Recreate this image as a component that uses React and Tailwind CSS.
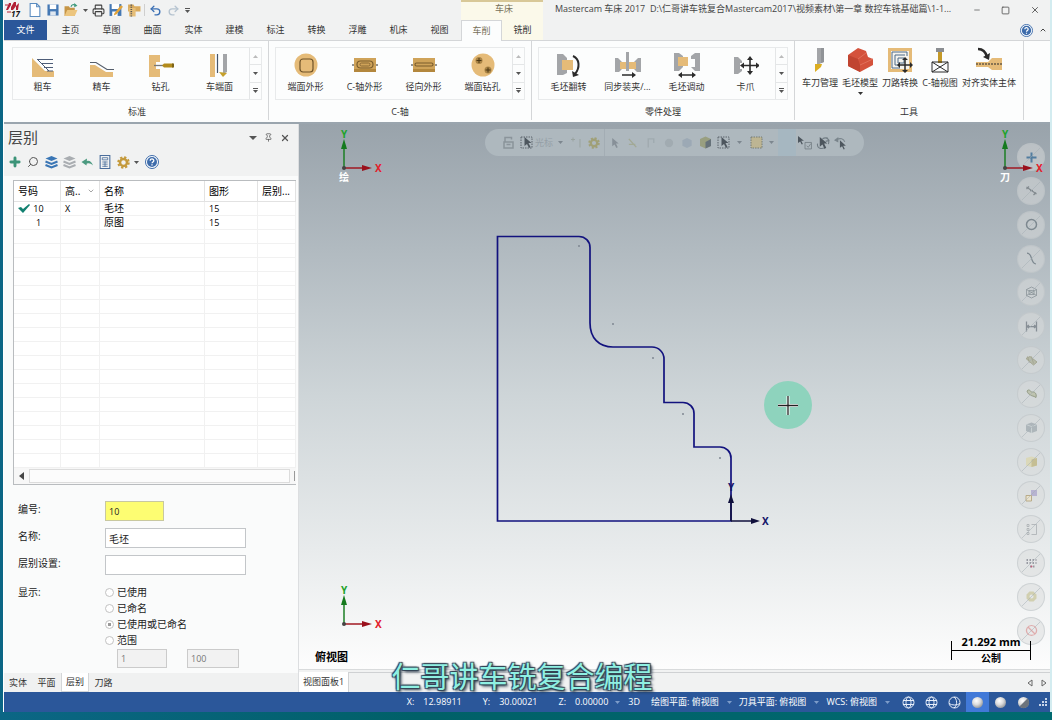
import React, { useState } from 'react';
import { ChevronDown, ChevronUp, Pin, X, Minus, Square, Undo2, Redo2, Search, Plus, Printer } from 'lucide-react';

const TAN = '#e5bb78';
const GREY = '#a3a5a8';
const INK = '#2b2b2b';

const MENU = ['主页', '草图', '曲面', '实体', '建模', '标注', '转换', '浮雕', '机床', '视图'];

const Icon = ({ size = 26, className = '', children }) => (
  <svg width={size} height={size} viewBox="0 0 26 26" fill="none" className={`shrink-0 ${className}`} aria-hidden="true">
    {children}
  </svg>
);

const Caret = ({ className = '' }) => (
  <svg width="5" height="3" viewBox="0 0 5 3" className={`shrink-0 ${className}`} fill="currentColor" aria-hidden="true">
    <path d="M0 0h5L2.5 3z" />
  </svg>
);

const Rough = () => (
  <Icon>
    <path d="M2 6 15 19h9v6H2z" fill={TAN} />
    <path d="M8 7.500h15M11 11.500h12M14 15.500h9M17 19h6" stroke="#4d5d78" />
    <path d="m7 7 12 12" stroke="#4d5d78" />
  </Icon>
);

const Finish = () => (
  <Icon>
    <path d="M1 13h5l11 7h7v5H1z" fill={TAN} />
    <path d="M1 10.500h6l11 7h7" stroke="#555e6b" strokeWidth="1.200" />
  </Icon>
);

const Drill = () => (
  <Icon>
    <path d="M1 3h11v7H8v7h4v8H1z" fill={TAN} />
    <path d="M6 13.500h9" stroke="#777" strokeWidth="1.300" />
    <path d="m14 13.500 2-2h9v4h-9z" fill="#b28b1c" />
    <path d="M24 11.500h2v4h-2z" fill="#7d6418" />
  </Icon>
);

const Face = () => (
  <Icon>
    <path d="M3 2h5v23H3z" fill={TAN} />
    <path d="M10.500 2v19" stroke="#44546a" strokeWidth="1.200" />
    <path d="M16 2h4v18l-4 2z" fill={GREY} />
    <path d="m12 20 8 1-4 4z" fill="#c5a02a" />
  </Icon>
);

const FaceContour = () => (
  <Icon>
    <circle cx="13" cy="13" r="11.500" fill={TAN} />
    <rect x="7" y="7" width="13" height="13" rx="3" stroke="#6e5228" strokeWidth="1.200" />
  </Icon>
);

const AxisContour = () => (
  <Icon>
    <path d="M0 13h26" stroke={INK} />
    <rect x="2" y="6" width="22" height="14" fill="#cfa359" />
    <path d="M2 17h22v3H2z" fill="#b3873d" />
    <rect x="5" y="9" width="16" height="7" rx="3.500" stroke="#7b5d2d" strokeWidth="1.200" />
    <rect x="8" y="11" width="10" height="3" rx="1.500" stroke="#8b6a35" />
  </Icon>
);

const CrossContour = () => (
  <Icon>
    <path d="M0 13h26" stroke={INK} />
    <rect x="2" y="6" width="22" height="14" fill="#cfa359" />
    <path d="M2 17h22v3H2z" fill="#b3873d" />
    <rect x="4" y="11" width="18" height="3" rx="1.500" stroke="#7b5d2d" strokeWidth="1.200" />
  </Icon>
);

const FaceDrill = () => (
  <Icon>
    <circle cx="13" cy="13" r="11.500" fill={TAN} />
    <circle cx="9" cy="8.500" r="3.500" fill="#a98446" />
    <circle cx="18" cy="18" r="3.500" fill="#a98446" />
    <path d="M9 6v5M6.500 8.500h5M18 15.500v5M15.500 18h5" stroke="#4b3713" />
  </Icon>
);

const Flip = () => (
  <Icon>
    <path d="M1 2h6l4 4v15l-4 2H1z" fill={GREY} />
    <path d="M6 8h11v10H6z" fill={TAN} />
    <path d="M17 4c7 3 7 12 2 18" stroke={INK} strokeWidth="2" />
    <path d="m16 19 1 6 6-2z" fill={INK} />
  </Icon>
);

const Sync = () => (
  <Icon>
    <path d="M0 6h3l4 4v7l-3 3H0zM26 6h-3l-4 4v7l3 3h4z" fill={GREY} />
    <path d="M5 10h16v7H5z" fill={TAN} />
    <path d="M11 0h3v19h-3z" fill={GREY} />
    <path d="M7 23h11" stroke={INK} strokeWidth="1.500" />
    <path d="m17 20 4 3-4 3z" fill={INK} />
  </Icon>
);

const Advance = () => (
  <Icon>
    <path d="M0 1h5l4 3v11l-4 4H0zM26 1h-5l-4 3v3h4v8h-4l4 4h5z" fill={GREY} />
    <path d="M4 5h10v9H4z" fill={TAN} />
    <path d="M7 23h12" stroke={INK} strokeWidth="1.500" />
    <path d="m8 20-4 3 4 3zM18 20l4 3-4 3z" fill={INK} />
  </Icon>
);

const Chuck = () => (
  <Icon>
    <path d="M1 5h4l4 4v2H7v6h2v2l-4 3H1z" fill={GREY} />
    <path d="M17 6v15M9 13.500h16" stroke={INK} strokeWidth="1.600" />
    <path d="m14 8 3-4 3 4zM14 19l3 4 3-4zM11 10.500l-4 3 4 3zM23 10.500l4 3-4 3z" fill={INK} />
  </Icon>
);

const ToolManager = () => (
  <Icon>
    <path d="M10 1h7v14l-7 3z" fill={GREY} />
    <path d="M14 1h3v14l-3 1z" fill="#909397" />
    <path d="M8 17h7l-1 3-6 5z" fill="#dcae22" />
  </Icon>
);

const StockModel = () => (
  <Icon>
    <path d="m1 8 10-7 8 3 2 6 5 2v6L13 25 1 19z" fill="#d4523c" />
    <path d="m1 8 10 4 2 6v7L1 19z" fill="#c04430" />
    <path d="m11 12 8-6M13 18l13-6" stroke="#e0705b" />
  </Icon>
);

const Transform = () => (
  <Icon>
    <path d="M1 1h24v24H1z" fill={TAN} />
    <path d="M4 4h18v18H4z" fill="#f5f3ee" />
    <path d="M5 5h15v4M5 5v16h8M8 8h10M8 8v10h5M11 11h6v5h-6z" stroke="#4d6b88" />
    <path d="M18 11v14M11 18h14" stroke={INK} strokeWidth="1.500" />
    <path d="m15 13 3-3 3 3zM15 23l3 3 3-3zM13 15l-3 3 3 3zM23 15l3 3-3 3z" fill={INK} />
  </Icon>
);

const AxisView = () => (
  <Icon>
    <path d="M9 1h8v4H9z" fill="#8b8e92" />
    <path d="M11 5h4v11h-4z" fill="#c59a28" />
    <path d="M5 15h16v10H5zM5 15l16 10M21 15 5 25" stroke={INK} />
  </Icon>
);

const AlignBody = () => (
  <Icon>
    <path d="M0 15h12l4-4h10v12H16l-4-3H0z" fill={TAN} />
    <path d="M0 17h26" stroke={INK} strokeWidth="1.200" strokeDasharray="2 1" />
    <path d="M2 2c5 0 8 4 9 8" stroke={INK} strokeWidth="2.500" />
    <path d="m7 10 6 3 1-7z" fill={INK} />
  </Icon>
);

const GALLERIES = [
  { title: '标准', items: [['粗车', Rough], ['精车', Finish], ['钻孔', Drill], ['车端面', Face]] },
  { title: 'C-轴', items: [['端面外形', FaceContour], ['C-轴外形', AxisContour], ['径向外形', CrossContour], ['端面钻孔', FaceDrill]] },
  { title: '零件处理', items: [['毛坯翻转', Flip], ['同步装夹/...', Sync], ['毛坯调动', Advance], ['卡爪', Chuck]] },
];

const TOOLS = [
  ['车刀管理', ToolManager],
  ['毛坯模型', StockModel, true],
  ['刀路转换', Transform],
  ['C-轴视图', AxisView],
  ['对齐实体主体', AlignBody],
];

const HelpIcon = ({ size = 14 }) => (
  <svg width={size} height={size} viewBox="0 0 14 14" aria-hidden="true">
    <circle cx="7" cy="7" r="6.500" fill="#fff" stroke="#3d6cab" />
    <circle cx="7" cy="7" r="5" fill="#3d6cab" />
    <path d="M5.200 5.700c0-2.400 3.700-2.300 3.600 0C8.800 7 7 7 7 8.300M7 9.300v1.200" fill="none" stroke="#fff" strokeWidth="1.300" />
  </svg>
);

function QuickAccess() {
  const btn = 'flex h-5 w-4 shrink-0 items-center justify-center';
  return (
    <div className="flex w-[457px] shrink-0 items-center">
      <svg width="18" height="18" viewBox="0 0 18 18" className="ml-px mr-1" aria-label="Mastercam 17">
        <path d="M1 9 4 2h2v4l3-5h2v4l3-3-1 7h-2V5L8 9H6V4L3 9z" fill="#b32035" />
        <path d="M2 11h4M0 4h3" stroke="#b32035" />
        <text x="6" y="16" fontSize="8" fontWeight="700" fontStyle="italic" fontFamily="Open Sans, sans-serif" fill="#111">17</text>
      </svg>
      <button aria-label="新建" className={btn}>
        <Icon size={14}><path d="M4 1h12l6 6v18H4z" fill="#fff" stroke="#5b8cc0" strokeWidth="2" /><path d="M16 1v6h6" stroke="#5b8cc0" strokeWidth="2" /></Icon>
      </button>
      <button aria-label="保存" className={`${btn} ml-[2px]`}>
        <Icon size={12}><path d="M1 1h24v24H1z" fill="#4478b4" /><path d="M6 1h14v10H6z" fill="#fff" /><path d="M7 16h12v9H7z" fill="#dfe7f0" /></Icon>
      </button>
      <button aria-label="打开" className={`${btn} ml-[2px]`}>
        <Icon size={14}><path d="M1 6h8l2 3h9v15H1z" fill="#c69546" /><path d="m6 13h19l-5 11H1z" fill="#ecc57e" /><path d="M13 7c1-4 5-5 8-3" stroke="#3f9a7c" strokeWidth="2" /><path d="m19 0 6 5-6 3z" fill="#3f9a7c" /></Icon>
      </button>
      <Caret className="ml-1 text-[#555]" />
      <button aria-label="打印" className={`${btn} ml-[2px]`}><Printer className="size-[13px] text-[#3f3f3f]" /></button>
      <button aria-label="另存为" className={`${btn} ml-[2px]`}>
        <Icon size={14}><path d="M1 2h22v22H1z" fill="#4478b4" /><path d="M5 2h14v9H5zM6 16h10v8H6z" fill="#fff" /><path d="m10 19 12-15 4 3-12 14-5 2z" fill="#e3a53a" /></Icon>
      </button>
      <button aria-label="压缩" className={`${btn} ml-[2px]`}>
        <Icon size={14}><path d="M2 3h10l2 3h11v10H2z" fill="#d9aa5c" /><path d="M4 9h12v16H4z" fill="#e6be78" /><path d="M8 3v22" stroke="#555" strokeWidth="3" strokeDasharray="2 2" /></Icon>
      </button>
      <span className="ml-[2px] h-3 w-px bg-[#cfcfcf]" />
      <button aria-label="撤销" className={`${btn} ml-[2px]`}><Undo2 className="size-[13px] text-[#3a6fb4]" strokeWidth={2.5} /></button>
      <button aria-label="重做" className={`${btn} ml-[2px]`}><Redo2 className="size-[13px] text-[#b5c3d0]" strokeWidth={2.5} /></button>
      <span className="ml-1 flex flex-col items-center gap-px text-[#555]">
        <span className="h-px w-[5px] bg-current" /><Caret />
      </span>
    </div>
  );
}

function TitleBar() {
  return (
    <header className="flex h-5 items-stretch">
      <QuickAccess />
      <div className="w-[82px] shrink-0 border-t-2 border-[#d8c898] bg-[#fbf9ea] pl-1 text-center text-[9px] leading-[14px] text-[#77705a]">车床</div>
      <div className="min-w-0 flex-1 truncate pl-3 text-[9px] leading-[18px] text-[#444] whitespace-pre">
        {'Mastercam 车床 2017  D:\\仁哥讲车铣复合Mastercam2017\\视频素材\\第一章 数控车铣基础篇\\1-1...'}
      </div>
      <div className="flex w-[88px] shrink-0 items-center text-[#444]">
        <button aria-label="最小化" className="flex flex-1 justify-center"><Minus className="size-2" /></button>
        <button aria-label="最大化" className="flex flex-1 justify-center"><Square className="size-[9px]" /></button>
        <button aria-label="关闭" className="flex flex-1 justify-center"><X className="size-[10px]" /></button>
      </div>
    </header>
  );
}

function MenuBar() {
  return (
    <nav className="flex h-[21px] items-stretch border-b border-[#d4d6d8] text-[9px] text-[#333]">
      <button className="mr-[3px] w-[43px] shrink-0 bg-[#2b579a] text-white">文件</button>
      {MENU.map((m) => (
        <button key={m} className="w-[41px] shrink-0">{m}</button>
      ))}
      <button className="-mb-px ml-px w-[41px] shrink-0 border-x border-t border-[#d4d6d8] bg-[#fcfdfd] text-[#77705a]">车削</button>
      <button className="w-[41px] shrink-0 bg-[#fbf9ea]">铣削</button>
      <div className="ml-auto flex items-center gap-[6px] pr-[3px]">
        <button aria-label="帮助"><HelpIcon size={13} /></button>
        <button aria-label="折叠功能区"><ChevronUp className="size-2 text-[#444]" strokeWidth={3} /></button>
      </div>
    </nav>
  );
}

function Gallery({ title, items }) {
  const step = 'flex flex-1 items-center justify-center border-[#e4e6e7] text-[#555]';
  return (
    <section className="flex shrink-0 flex-col items-center border-r border-[#d4d6d8] px-[6px] pt-[6px]">
      <div className="flex h-[53px] border border-[#e8eaeb]">
        {items.map(([label, Glyph]) => (
          <button key={label} className="flex w-[59px] flex-col items-center gap-[2px] pt-1">
            <Glyph />
            <span className="text-[9px] leading-[14px] whitespace-nowrap">{label}</span>
          </button>
        ))}
        <div className="flex w-[12px] flex-col border-l border-[#e4e6e7]">
          <button aria-label="上一行" className={`${step} border-b`}><Caret className="rotate-180 text-[#bbb]" /></button>
          <button aria-label="下一行" className={`${step} border-b`}><Caret /></button>
          <button aria-label="更多" className={`${step} flex-col gap-px`}>
            <span className="h-px w-[5px] bg-current" /><Caret />
          </button>
        </div>
      </div>
      <h2 className="mt-[5px] text-[9px] leading-[14px]">{title}</h2>
    </section>
  );
}

function Ribbon() {
  return (
    <div className="flex h-[83px] items-stretch overflow-hidden border-b-2 border-[#9aa5ae] bg-[#fcfdfd] pb-[2px] pl-[2px] text-[#333]">
      {GALLERIES.map((g) => <Gallery key={g.title} {...g} />)}
      <section className="flex shrink-0 flex-col items-center border-r border-[#d4d6d8] px-[5px] pt-[6px]">
        <div className="flex h-[53px]">
          {TOOLS.map(([label, Glyph, more]) => (
            <button key={label} className="flex min-w-[40px] flex-col items-center px-[2px]">
              <Glyph />
              <span className="mt-[3px] text-[9px] leading-[14px] whitespace-nowrap">{label}</span>
              {more && <Caret className="mt-[2px]" />}
            </button>
          ))}
        </div>
        <h2 className="mt-[5px] text-[9px] leading-[14px]">工具</h2>
      </section>
    </div>
  );
}

const Layers = ({ color }) => (
  <Icon size={13}>
    <path d="m13 0 12 5-12 5L1 5z" fill={color} />
    <path d="m1 11 12 5 12-5M1 18l12 5 12-5" stroke={color} strokeWidth="4" />
  </Icon>
);

const Gear = ({ size = 13, color = '#c49a3c' }) => (
  <Icon size={size}>
    <circle cx="13" cy="13" r="7" stroke={color} strokeWidth="5" />
    <circle cx="13" cy="13" r="10.500" stroke={color} strokeWidth="4" strokeDasharray="4.500 3.750" />
  </Icon>
);

const Check = () => (
  <svg width="12" height="9" viewBox="0 0 12 9" aria-label="当前层" className="shrink-0">
    <path d="m0 4 3-1 2 2 6-5 1 1-7 8z" fill="#118070" />
  </svg>
);

const ROWS = [
  { no: 10, active: true, high: 'X', name: '毛坯', count: 15 },
  { no: 1, active: false, high: '', name: '原图', count: 15 },
];

function LevelTable() {
  const blanks = Array.from({ length: 17 }, (_, i) => i);
  const cell = 'h-[14px] border-r border-b border-[#f1f1f1] p-0 pl-1 leading-[13px]';
  const head = 'h-[21px] border-r border-b border-[#e2e2e2] p-0 pl-1 text-left font-normal whitespace-nowrap overflow-hidden';
  return (
    <div className="ml-[9px] mr-[2px] overflow-hidden border-t border-l border-b border-[#b9bcbf] bg-white">
      <table className="w-full table-fixed border-separate border-spacing-0 text-[10px]">
        <colgroup>
          <col className="w-[47px]" /><col className="w-[39px]" /><col /><col className="w-[53px]" /><col className="w-[38px]" />
        </colgroup>
        <thead>
          <tr>
            <th className={head}>号码</th>
            <th className={head}><span className="flex items-center justify-between pr-1">高..<ChevronDown className="size-[8px] text-[#777]" /></span></th>
            <th className={head}>名称</th>
            <th className={head}>图形</th>
            <th className={head}>层别...</th>
          </tr>
        </thead>
        <tbody>
          {ROWS.map((r) => (
            <tr key={r.no}>
              <td className={cell}>
                <span className="flex items-center gap-[3px] text-[9px]">
                  {r.active ? <Check /> : <span className="w-3" />}
                  <span className="w-[11px] text-center">{r.no}</span>
                </span>
              </td>
              <td className={`${cell} text-[9px]`}>{r.high}</td>
              <td className={cell}>{r.name}</td>
              <td className={`${cell} text-[9px]`}>{r.count}</td>
              <td className={cell} />
            </tr>
          ))}
          {blanks.map((i) => (
            <tr key={i}>
              <td className={cell} /><td className={cell} /><td className={cell} /><td className={cell} /><td className={cell} />
            </tr>
          ))}
        </tbody>
      </table>
      <div className="flex h-[16px] items-stretch bg-[#f7f7f7]">
        <button aria-label="向左滚动" className="flex w-[15px] items-center justify-center text-[#444]">
          <svg width="5" height="8" viewBox="0 0 5 8" fill="currentColor"><path d="M5 0v8L0 4z" /></svg>
        </button>
        <div className="my-px flex-1 border border-[#dcdcdc] bg-[#fcfcfc]" />
        <div className="my-[3px] ml-1 mr-px w-px bg-[#999]" />
      </div>
    </div>
  );
}

const DISPLAY = ['已使用', '已命名', '已使用或已命名', '范围'];

function LevelForm() {
  const [mode, setMode] = useState(DISPLAY[2]);
  const field = 'h-5 border border-[#c3c6c9] bg-white px-[3px] text-[10px]';
  const label = 'w-[87px] shrink-0 leading-4';
  return (
    <form className="mt-[16px] flex flex-col gap-[7px] pl-[14px] text-[10px] text-[#222]">
      <div className="flex">
        <label className={label} htmlFor="no">编号:</label>
        <input id="no" className="h-5 w-[59px] border border-[#c8c8a0] bg-[#fdfd72] px-[3px] text-[9px]" defaultValue="10" />
      </div>
      <div className="flex">
        <label className={label} htmlFor="name">名称:</label>
        <input id="name" className={`${field} w-[141px]`} defaultValue="毛坯" />
      </div>
      <div className="flex">
        <label className={label} htmlFor="set">层别设置:</label>
        <input id="set" className={`${field} w-[141px]`} />
      </div>
      <fieldset className="flex pt-[2px]">
        <span className={label}>显示:</span>
        <div>
          {DISPLAY.map((d) => (
            <label key={d} className="flex h-4 items-center gap-[3px]">
              <input
                type="radio"
                name="display"
                checked={mode === d}
                onChange={() => setMode(d)}
                className="size-[9px] appearance-none rounded-full border border-[#c2c2c2] bg-white checked:bg-[radial-gradient(#999_35%,#fff_40%)]"
              />
              {d}
            </label>
          ))}
          <div className="flex gap-5 pl-3 pt-px">
            <input aria-label="范围起始" disabled className="h-[19px] w-[50px] border border-[#cbcbcb] bg-[#f2f2f2] px-[3px] text-[9px] text-[#777]" defaultValue="1" />
            <input aria-label="范围结束" disabled className="h-[19px] w-[52px] border border-[#cbcbcb] bg-[#f2f2f2] px-[3px] text-[9px] text-[#777]" defaultValue="100" />
          </div>
        </div>
      </fieldset>
    </form>
  );
}

function LevelPanel() {
  const btn = 'flex w-[18px] items-center justify-center';
  return (
    <aside className="flex w-[295px] shrink-0 flex-col border-r border-[#dcdee0] bg-[#fafbfb]">
      <div className="bg-[#f1f2f2] pb-[3px]">
        <div className="flex h-[27px] items-center pl-1 pr-2">
          <h1 className="text-[15px] text-[#444]">层别</h1>
          <div className="ml-auto flex items-center gap-[7px] text-[#555]">
            <button aria-label="菜单"><svg width="8" height="4" viewBox="0 0 8 4" fill="currentColor"><path d="M0 0h8L4 4z" /></svg></button>
            <button aria-label="固定"><Pin className="size-[9px]" /></button>
            <button aria-label="关闭面板"><X className="size-[10px]" strokeWidth={3} /></button>
          </div>
        </div>
        <div className="flex h-[22px] items-center pl-[2px]">
          <button aria-label="添加层别" className={btn}><Plus className="size-[14px] text-[#3c9478]" strokeWidth={5} /></button>
          <button aria-label="查找" className={btn}><Search className="size-[12px] -scale-x-100 text-[#555]" /></button>
          <button aria-label="全部显示" className={btn}><Layers color="#3a76b5" /></button>
          <button aria-label="全部隐藏" className={btn}><Layers color="#a9adb1" /></button>
          <button aria-label="重置" className={btn}>
            <Icon size={13}><path d="M7 12c7-5 14-3 17 7-5-5-10-6-16-2z" fill="#4c9a80" /><path d="M1 12 12 5l-1 14z" fill="#4c9a80" /></Icon>
          </button>
          <button aria-label="属性" className={btn}>
            <Icon size={14}><path d="M4 1h18v24H4z" stroke="#4a6d9c" strokeWidth="2" /><path d="M8 5h10v4H8zM8 13h10M8 17h10M8 21h10M13 12v10" stroke="#4a6d9c" strokeWidth="1.500" /></Icon>
          </button>
          <button aria-label="选项" className={btn}><Gear /></button>
          <Caret className="ml-[2px] mr-[4px] text-[#555]" />
          <button aria-label="帮助" className={btn}><HelpIcon /></button>
        </div>
      </div>
      <div className="flex-1 pt-1">
        <LevelTable />
        <LevelForm />
      </div>
      <div className="flex h-[19px] items-stretch bg-[#f0f1f1] text-[9px] text-[#333]">
        <button className="w-[28px]">实体</button>
        <button className="w-[29px]">平面</button>
        <button className="w-[28px] border-x border-b border-[#d4d6d8] bg-white">层别</button>
        <button className="w-[29px]">刀路</button>
      </div>
    </aside>
  );
}

// Y up / X right triad with an optional caption under the origin
const Axes = ({ x, y, caption }) => (
  <g transform={`translate(${x} ${y})`} fontFamily="Noto Sans, sans-serif" fontWeight="700" fontSize="10">
    <path d="M0 0v-22" stroke="#1c7f24" strokeWidth="1.500" />
    <path d="m-3-19 3-10 3 10z" fill="#157a1e" />
    <path d="M0 0h22" stroke="#a01822" strokeWidth="1.500" />
    <path d="m18-3 10 3-10 3z" fill="#9a101c" />
    <circle r="2" fill="#444" />
    <text x="-3" y="-30" fill="#1fa32b">Y</text>
    <text x="31" y="4" fill="#e3202b">X</text>
    {caption && <text x="-5" y="13" fill="#fff" fontFamily="Noto Sans CJK SC, sans-serif">{caption}</text>}
  </g>
);

function Drawing() {
  return (
    <svg width="751" height="545" viewBox="0 0 751 545" className="pointer-events-none absolute left-0 top-0" fill="none" aria-label="毛坯轮廓">
      <Axes x={45} y={44} caption="绘" />
      <Axes x={706} y={44} caption="刀" />
      <Axes x={45} y={500} />
      <path
        d="M198.500 397V112.500H280a11 11 0 0 1 11 11V199c0 15 9 24 23 24H353a12 12 0 0 1 12 12V278.500H384a11 11 0 0 1 11 11V323H421a11 11 0 0 1 11 11V397Z"
        stroke="#12127e"
        strokeWidth="1.700"
      />
      <g fill="#7f8792">
        <circle cx="280" cy="122" r="1" /><circle cx="314" cy="200" r="1" /><circle cx="354" cy="234" r="1" />
        <circle cx="384" cy="290" r="1" /><circle cx="421" cy="334" r="1" />
      </g>
      <path d="M432 397v-20M432 397h22" stroke="#10103c" strokeWidth="1.500" />
      <path d="m429 379 3-9 3 9zM452 394l9 3-9 3z" fill="#10103c" />
      <text x="429" y="367" fontSize="10" fontWeight="700" fontFamily="Noto Sans, sans-serif" fill="#15156a">Y</text>
      <text x="463" y="401" fontSize="10" fontWeight="700" fontFamily="Noto Sans, sans-serif" fill="#15156a">X</text>
      <circle cx="489" cy="281" r="24" fill="#8ed3bd" />
      <path d="M489 272v19M479 281.500h20" stroke="#fff" strokeWidth="3" />
      <path d="M489 272v19M479 281.500h20" stroke="#222" strokeWidth="1.300" />
    </svg>
  );
}

const Arrow = ({ x = 0, opacity = 1 }) => (
  <path d={`M${x} 2v18l5-4 4 8 3-2-4-8h6z`} fill="#4d565e" opacity={opacity} />
);

function SelectionBar() {
  const btn = 'flex h-full w-[18px] shrink-0 items-center justify-center';
  return (
    <div className="absolute top-[5px] left-[186px] flex h-[27px] w-[379px] items-center rounded-full bg-[#aeb8be] pl-[14px] pr-4 text-[#7d878f]">
      <button aria-label="锁定" className={btn}>
        <Icon size={13}><path d="M4 12h18v12H4zM9 17h8" stroke="#8b949b" strokeWidth="3" /><path d="M6 12V3h13v4" stroke="#8b949b" strokeWidth="3" /></Icon>
      </button>
      <button aria-label="光标捕捉" className={btn}>
        <Icon size={13}><path d="M2 2h22v22H2z" stroke="#5c656c" strokeWidth="2" strokeDasharray="3 2" /><Arrow x={9} /></Icon>
      </button>
      <span className="mr-[5px] text-[9px] whitespace-nowrap opacity-50">光标</span>
      <Caret className="mr-1" />
      <button aria-label="点" className={btn}><Icon size={13}><path d="M6 3v8M2 7h8M20 6v17" stroke="#99a3a0" strokeWidth="2" /></Icon></button>
      <button aria-label="选择设置" className={btn}><Gear size={12} color="#a0a077" /></button>
      <span className="mx-px h-full w-px shrink-0 bg-[#a3adb4]" />
      <button aria-label="选择" className={btn}><Icon size={12}><Arrow x={7} opacity={0.4} /></Icon></button>
      <button aria-label="链选择" className={btn}><Icon size={12}><path d="m4 4 16 18M4 16h14" stroke="#a2a996" strokeWidth="3" /></Icon></button>
      <button aria-label="边界" className={btn}><Icon size={12}><path d="M7 23V4h12v9" stroke="#a0aab0" strokeWidth="3" /></Icon></button>
      <button aria-label="实体面" className={btn}><Icon size={12}><circle cx="13" cy="13" r="9" fill="#a1abb1" /></Icon></button>
      <button aria-label="实体" className={btn}><Icon size={12}><path d="m13 2 10 5v12l-10 5-10-5V7z" fill="#9ca9b5" /></Icon></button>
      <button aria-label="主体" className={btn}>
        <Icon size={13}><path d="m13 1 11 5v14l-11 5-11-5V6z" fill="#999f80" /><path d="m13 12 11-6v14l-11 5z" fill="#66727a" /></Icon>
      </button>
      <button aria-label="窗选" className={btn}><Icon size={13}><path d="M2 2h22v22H2z" stroke="#5c656c" strokeWidth="2" strokeDasharray="3 2" /><Arrow x={9} /></Icon></button>
      <Caret className="mx-[5px]" />
      <button aria-label="范围内" className={btn}><Icon size={13}><path d="M2 2h22v22H2z" fill="#bdb593" stroke="#777d75" strokeWidth="2" strokeDasharray="3 2" /></Icon></button>
      <Caret className="mx-1" />
      <span className="h-full w-[18px] shrink-0 bg-[#a6b7c1]" />
      <button aria-label="验证选择" className={btn}><Icon size={14}><path d="M0 0v13l4-3 3 6 2-1-3-6h5z" fill="#4d565e" /><path d="M13 12h12v12H13zM16 18l3 3 5-7" stroke="#727c83" strokeWidth="1.500" /></Icon></button>
      <button aria-label="反选" className={btn}><Icon size={14}><path d="M3 14c-2 8 6 11 13 8M12 5c8-4 14 1 11 10M20 3l4 5-6 2" stroke="#717c84" strokeWidth="2" /><Arrow x={7} /></Icon></button>
      <button aria-label="上次选择" className={btn}><Icon size={14}><path d="M4 7c8-4 14-2 16 4" stroke="#7a858c" strokeWidth="2" /><path d="m0 8 8-6v10z" fill="#7a858c" /><path d="M11 8v14l4-3 3 6 2-1-3-6h5z" fill="#4d565e" /></Icon></button>
    </div>
  );
}

const MASKS = [
  ['点', <path d="M13 3v20M3 13h20" stroke="#47769b" strokeWidth="4" />],
  ['线', <path d="m3 6 20 14M3 10l5-5M17 22l5-5M10 13h6" stroke="#7c8489" strokeWidth="2.500" />],
  ['圆弧', <circle cx="13" cy="13" r="10" stroke="#76828a" strokeWidth="3" />],
  ['曲线', <path d="M4 2c12 0 6 21 18 22" stroke="#76828a" strokeWidth="2.500" />],
  ['曲面线框', <path d="m13 2 10 5v12l-10 5-10-5V7zM3 7l20 12M23 7 3 19M8 9h10v8H8z" stroke="#808b90" strokeWidth="1.500" />],
  ['标注', <path d="M3 3v20M23 3v20M5 13h16M8 10l-4 3 4 3M18 10l4 3-4 3" stroke="#808890" strokeWidth="2.500" />],
  ['曲面', <path d="m2 9 8-4 14 11-7 6zM5 5l4 12M13 5l4 14" fill="#b4b8a5" stroke="#a0a28c" strokeWidth="2" />],
  ['曲面组', <path d="M4 8c5-6 7 3 11 2s9 3 7 11c-6-4-7-2-11-5S6 14 4 8z" fill="#bcc1ac" stroke="#8e967f" strokeWidth="2" />],
  ['网格', <g><path d="m2 7 11-4 11 4v13l-11 4-11-4z" fill="#a9b2b7" /><path d="M2 7l11 4 11-4M13 11v13" stroke="#c7cfd2" strokeWidth="2" /></g>],
  ['实体', <g><path d="m2 6 11-3 11 3v15l-11 3-11-3z" fill="#dcd8b6" /><path d="M13 9 24 6v15l-11 3z" fill="#c3bb8c" /></g>],
  ['颜色', <g><path d="M12 2h12v12H12z" fill="#b4afd0" /><path d="M2 13h11v11H2z" fill="#ece4cb" stroke="#b6a680" strokeWidth="2" /></g>],
  ['层别', <path d="M4 3h4v4H4zM4 11h4v4H4zM4 19h4v4H4zM13 3h10v20H13" stroke="#a2a6a9" strokeWidth="1.500" />],
  ['群组', <g><path d="M3 6h20M3 12h20M10 19h9" stroke="#8f939b" strokeWidth="4" strokeDasharray="3 3" /><circle cx="13" cy="19" r="2" fill="#c05775" /></g>],
  ['选项', <path d="M9 3h8l6 6v8l-6 6H9l-6-6V9zM13 9a4 4 0 1 0 .1 0z" fill="#cfcdab" fillRule="evenodd" />],
  ['清除', <path d="M13 3a10 10 0 1 0 .1 0zM6 6l14 14" stroke="#dfa6a6" strokeWidth="2.500" />],
];

function MaskBar() {
  return (
    <div className="absolute top-[19px] right-[5px] bottom-[24px] flex flex-col justify-between">
      {MASKS.map(([name, glyph]) => (
        <button key={name} aria-label={name} className="relative flex size-7 items-center justify-center rounded-full border border-[#b9c0c4]/50 bg-[#d9dcdc]/50">
          <Icon size={13} className="opacity-90">{glyph}</Icon>
          <svg width="26" height="26" viewBox="0 0 26 26" className="absolute inset-0" aria-hidden="true">
            <path d="M4 22 22 4" stroke="#a5afb5" strokeWidth="1" opacity="0.500" />
          </svg>
        </button>
      ))}
    </div>
  );
}

function Viewport() {
  return (
    <main className="flex min-w-0 flex-1 flex-col">
      <div className="relative flex-1 overflow-hidden bg-[linear-gradient(#99a3ab_0%,#b2bbc1_24%,#ced5d8_50%,#e8ebec_78%,#fdfdfd_100%)]">
        <MaskBar />
        <Drawing />
        <SelectionBar />
        <div className="absolute bottom-1 left-4 text-[11px] leading-4 font-bold text-black">俯视图</div>
        <div className="absolute right-[19px] bottom-[6px] w-[80px] text-center font-bold text-black">
          <div className="text-[11px] leading-[12px]">21.292 mm</div>
          <div className="flex h-[5px] items-center before:h-[19px] before:w-px before:bg-black after:h-[19px] after:w-px after:bg-black">
            <div className="h-px flex-1 bg-black" />
          </div>
          <div className="text-[10px] leading-[10px]">公制</div>
        </div>
      </div>
      <div className="flex h-[23px] items-stretch border-t border-[#d9dbdc] bg-[#f1f2f2] text-[9px] text-[#333]">
        <button className="mt-[2px] border-r border-[#d0d2d4] bg-white px-1">视图面板1</button>
        <div className="mt-[2px] flex flex-1 items-center justify-end gap-[8px] border-t border-[#cfd1d3] pr-[3px] text-[#666]">
          <button aria-label="上一面板"><svg width="6" height="8" viewBox="0 0 6 8" fill="none" stroke="currentColor"><path d="M5 1v6L1 4z" /></svg></button>
          <button aria-label="下一面板"><svg width="6" height="8" viewBox="0 0 6 8" fill="none" stroke="currentColor"><path d="M1 1v6l4-3z" /></svg></button>
        </div>
      </div>
    </main>
  );
}

const Globe = () => (
  <svg width="13" height="13" viewBox="0 0 13 13" fill="none" stroke="#e8effa" aria-hidden="true">
    <circle cx="6.500" cy="6.500" r="5.500" /><ellipse cx="6.500" cy="6.500" rx="2.500" ry="5.500" /><path d="M1 4.500h11M1 8.500h11" />
  </svg>
);

const HiddenGlobe = () => (
  <svg width="13" height="13" viewBox="0 0 13 13" fill="none" stroke="#e8effa" aria-hidden="true">
    <circle cx="6.500" cy="6.500" r="5.500" /><path d="M6 1c3 2 4 8 0 11M1 7.500c3 2 8 2 11 0" />
  </svg>
);

const Ball = ({ half }) => (
  <svg width="13" height="13" viewBox="0 0 13 13" aria-hidden="true">
    <defs>
      <radialGradient id="ball" cx="0.400" cy="0.350" r="0.700">
        <stop offset="0" stopColor="#fff" /><stop offset="0.500" stopColor="#dcdcdc" /><stop offset="1" stopColor="#8e9298" />
      </radialGradient>
    </defs>
    <circle cx="6.500" cy="6.500" r="5.500" fill="url(#ball)" />
    {half && <path d="M10.500 2.500a5.500 5.500 0 0 1-8 8z" fill="#6d747c" />}
  </svg>
);

const COORDS = [['X:', '12.98911'], ['Y:', '30.00021'], ['Z:', '0.00000']];
const PLANES = ['绘图平面: 俯视图', '刀具平面: 俯视图', 'WCS: 俯视图'];

function StatusBar() {
  const sq = 'flex h-full w-[23px] items-center justify-center';
  return (
    <footer className="flex h-5 items-center justify-end bg-[#2b579a] text-[9px] whitespace-pre text-white">
      <div className="mr-[7px] flex gap-[21px]">
        {COORDS.map(([axis, value]) => (
          <span key={axis} className="flex gap-[9px]"><span>{axis}</span><span>{value}</span></span>
        ))}
      </div>
      <Caret className="mr-2 text-[#7d9cc9]" />
      <span className="mr-[11px]">3D</span>
      {PLANES.map((p) => (
        <button key={p} className="flex items-center gap-2 pr-[7px]">{p}<Caret className="text-[#7d9cc9]" /></button>
      ))}
      <div className="flex h-full pr-[3px]">
        <button aria-label="线框" className={sq}><Globe /></button>
        <button aria-label="隐藏线框" className={sq}><Globe /></button>
        <button aria-label="消隐" className={sq}><HiddenGlobe /></button>
        <button aria-label="着色" className={`${sq} bg-[#4179d8]`}><Ball /></button>
        <button aria-label="着色带边" className={sq}><Ball /></button>
        <button aria-label="半透明" className={sq}><Ball half /></button>
      </div>
      <svg width="10" height="10" viewBox="0 0 10 10" fill="#c9d6ea" className="mr-[2px]" aria-hidden="true">
        <path d="M7 1h2v2H7zM7 4h2v2H7zM7 7h2v2H7zM4 4h2v2H4zM4 7h2v2H4zM1 7h2v2H1z" />
      </svg>
    </footer>
  );
}

export default function App() {
  return (
    <div className="relative flex min-h-screen flex-col bg-[linear-gradient(90deg,#0b6685,#006068_40%,#006a70)] pb-2 pl-[3px] font-['Open_Sans','Noto_Sans_CJK_SC',sans-serif]">
      <div className="flex flex-1 flex-col border-l border-r-2 border-l-white border-r-[#d3ecf0] bg-[#f1f2f2]">
        <TitleBar />
        <MenuBar />
        <Ribbon />
        <div className="flex flex-1">
          <LevelPanel />
          <Viewport />
        </div>
        <StatusBar />
      </div>
      <p className="pointer-events-none absolute inset-x-0 bottom-[26px] pr-2 text-center text-[29px] leading-[34px] text-[#8ff0e2] [text-shadow:1px_1px_1px_#345,-1px_-1px_1px_#345,1px_-1px_1px_#345,-1px_1px_1px_#345,2px_2px_3px_#234]">
        仁哥讲车铣复合编程
      </p>
    </div>
  );
}
